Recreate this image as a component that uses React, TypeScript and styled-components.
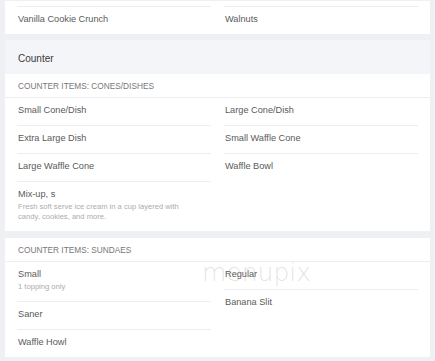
import React from "react";
import styled, { createGlobalStyle } from "styled-components";

interface IItem {
  name: string;
  desc?: string;
}

interface ISection {
  title: string;
  left: IItem[];
  right: IItem[];
}

const GlobalStyle = createGlobalStyle`
  html, body {
    margin: 0;
    padding: 0;
    background: #eff0f3;
    overflow: hidden;
  }
  * {
    box-sizing: border-box;
  }
`;

const Page = styled.main`
  font-family: "Liberation Sans", Arial, sans-serif;
  padding: 1px 5px 0;
`;

const Card = styled.section`
  position: relative;
  background: #fff;
`;

const Columns = styled.div`
  display: grid;
  grid-template-columns: 1fr 1fr;
  column-gap: 13px;
  padding: 0 12px;
  align-items: start;
`;

// bottom edge of the row that is scrolled out of view
const ScrolledEdge = styled.div`
  height: 6px;
  border-bottom: 1px solid #eceef1;
`;

const Column = styled.ul`
  list-style: none;
  margin: 0;
  padding: 0;
`;

const Item = styled.li`
  padding: 7px 1px 9px;
  border-bottom: 1px solid #eceef1;
  &:last-child {
    border-bottom: none;
  }
`;

const ItemName = styled.div`
  font-size: 9.2px;
  line-height: 11px;
  color: #5a5a5a;
`;

const ItemDesc = styled.div`
  margin-top: 2px;
  font-size: 7.6px;
  line-height: 10px;
  color: #acacac;
  max-width: 180px;
`;

const Category = styled.div`
  margin-top: 6px;
`;

const CategoryTitle = styled.h2`
  margin: 0;
  padding: 13px 13px 9px;
  background: #f4f5f8;
  font-size: 10px;
  line-height: 12px;
  font-weight: normal;
  color: #3a3a3a;
`;

const SectionList = styled.div`
  display: flex;
  flex-direction: column;
  gap: 7px;
`;

const SectionTitle = styled.h3`
  margin: 0;
  padding: 0 13px;
  height: 24px;
  display: flex;
  align-items: center;
  border-bottom: 1px solid #eceef1;
  font-size: 8.3px;
  font-weight: normal;
  color: #777;
  text-transform: uppercase;
`;

const Watermark = styled.div`
  position: absolute;
  left: 197px;
  top: 20px;
  font-family: "DejaVu Sans", sans-serif;
  font-size: 25px;
  font-weight: 200;
  color: rgba(160, 160, 160, 0.3);
  pointer-events: none;
`;

const toppings: ISection = {
  title: "",
  left: [{ name: "Vanilla Cookie Crunch" }],
  right: [{ name: "Walnuts" }],
};

const counter: ISection[] = [
  {
    title: "Counter Items: Cones/Dishes",
    left: [
      { name: "Small Cone/Dish" },
      { name: "Extra Large Dish" },
      { name: "Large Waffle Cone" },
      {
        name: "Mix-up, s",
        desc: "Fresh soft serve ice cream in a cup layered with candy, cookies, and more.",
      },
    ],
    right: [
      { name: "Large Cone/Dish" },
      { name: "Small Waffle Cone" },
      { name: "Waffle Bowl" },
    ],
  },
  {
    title: "Counter Items: Sundaes",
    left: [
      { name: "Small", desc: "1 topping only" },
      { name: "Saner" },
      { name: "Waffle Howl" },
    ],
    right: [{ name: "Regular" }, { name: "Banana Slit" }],
  },
];

const ItemColumn = ({ items }: { items: IItem[] }) => (
  <Column>
    {items.map((item) => (
      <Item key={item.name}>
        <ItemName>{item.name}</ItemName>
        {item.desc && <ItemDesc>{item.desc}</ItemDesc>}
      </Item>
    ))}
  </Column>
);

const App = () => {
  return (
    <>
      <GlobalStyle />
      <Page>
        <Card>
          <Columns>
            <ScrolledEdge />
            <ScrolledEdge />
            <ItemColumn items={toppings.left} />
            <ItemColumn items={toppings.right} />
          </Columns>
        </Card>

        <Category>
          <CategoryTitle>Counter</CategoryTitle>
          <SectionList>
            {counter.map((section, i) => (
              <Card key={section.title}>
                <SectionTitle>{section.title}</SectionTitle>
                <Columns>
                  <ItemColumn items={section.left} />
                  <ItemColumn items={section.right} />
                </Columns>
                {i === 1 && <Watermark>menupix</Watermark>}
              </Card>
            ))}
          </SectionList>
        </Category>
      </Page>
    </>
  );
};

export default App;
